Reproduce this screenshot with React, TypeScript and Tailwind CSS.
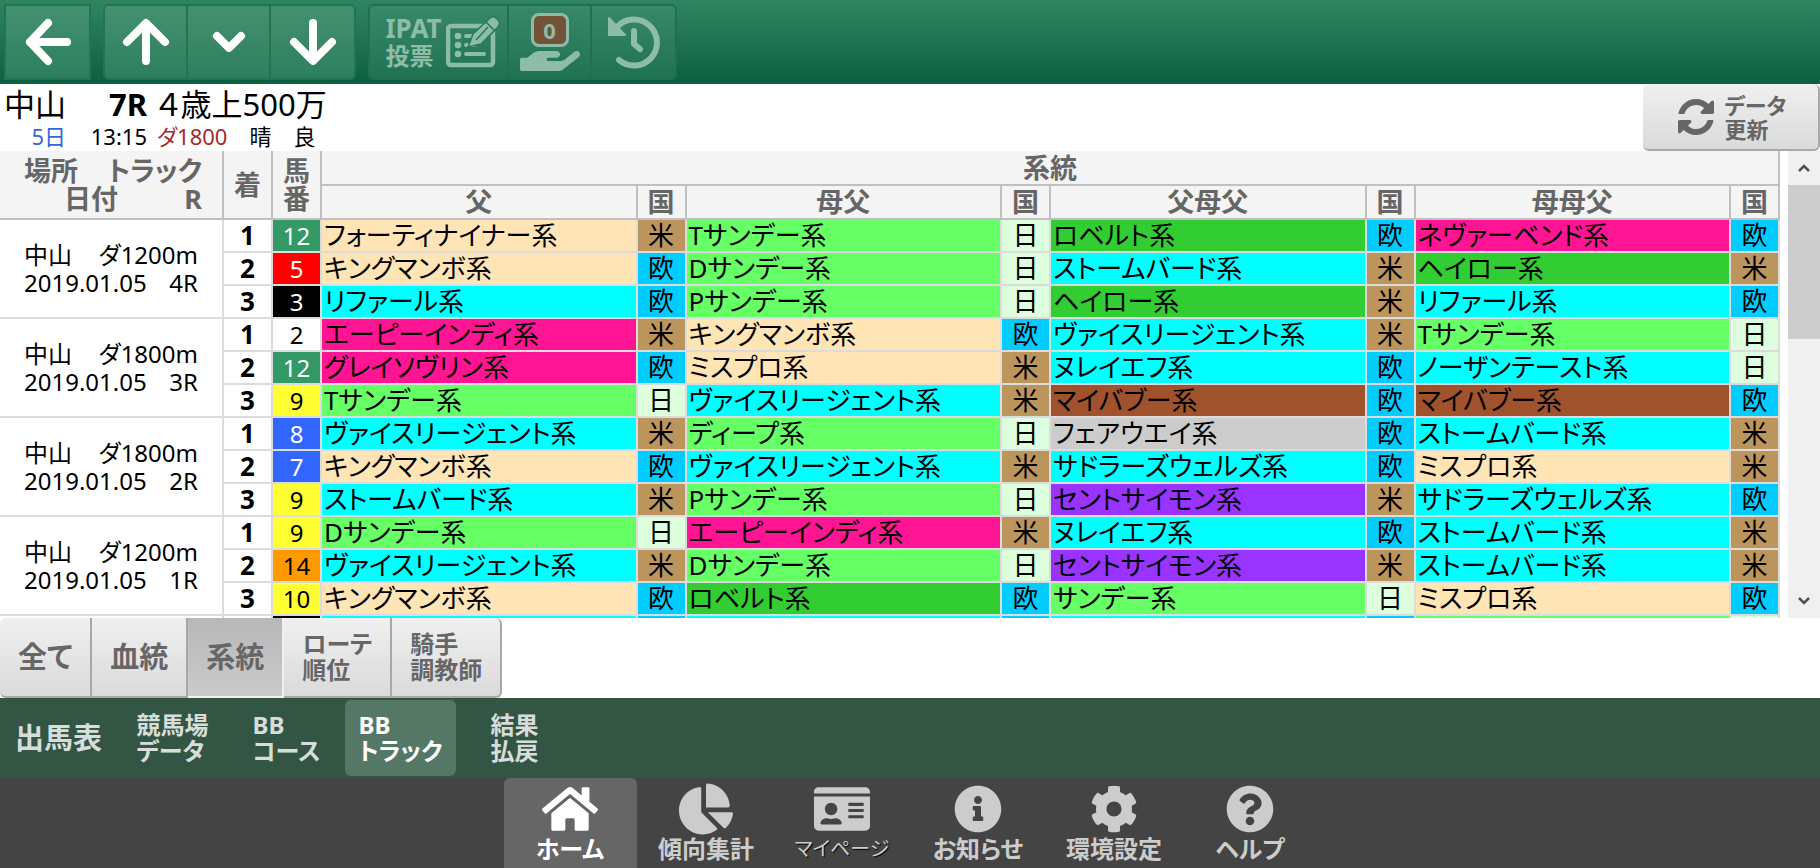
import clsx from "clsx";
import type { ReactNode } from "react";
import {
  FaChartPie,
  FaCog,
  FaHome,
  FaIdCard,
  FaInfoCircle,
  FaQuestionCircle,
} from "react-icons/fa";

// bloodline group -> cell colour
const lineColors = {
  native: "bg-[#ffe4b5]",
  northern: "bg-[#00ffff]",
  sunday: "bg-[#66ff66]",
  turn: "bg-[#32cd32]",
  nasrullah: "bg-[#ff1493]",
  mybabu: "bg-[#a0522d]",
  simon: "bg-[#9933ff]",
  other: "bg-[#cccccc]",
};

const lines: Record<string, keyof typeof lineColors> = {
  フォーティナイナー系: "native",
  キングマンボ系: "native",
  ミスプロ系: "native",
  リファール系: "northern",
  ヴァイスリージェント系: "northern",
  ストームバード系: "northern",
  ヌレイエフ系: "northern",
  ノーザンテースト系: "northern",
  サドラーズウェルズ系: "northern",
  Tサンデー系: "sunday",
  Dサンデー系: "sunday",
  Pサンデー系: "sunday",
  サンデー系: "sunday",
  ディープ系: "sunday",
  ロベルト系: "turn",
  ヘイロー系: "turn",
  エーピーインディ系: "nasrullah",
  グレイソヴリン系: "nasrullah",
  ネヴァーベンド系: "nasrullah",
  マイバブー系: "mybabu",
  セントサイモン系: "simon",
  フェアウエイ系: "other",
};

const countryColors: Record<string, string> = {
  米: "bg-[#bc955c]",
  欧: "bg-[#00ccff]",
  日: "bg-[#ddffdd]",
};

const frameColors = {
  white: "bg-white text-black",
  black: "bg-black text-white",
  red: "bg-[#ff0000] text-white",
  blue: "bg-[#3366ff] text-white",
  yellow: "bg-[#ffff33] text-black",
  green: "bg-[#339966] text-white",
  orange: "bg-[#ff9900] text-black",
};

type Horse = {
  no: number;
  frame: keyof typeof frameColors;
  blood: [string, string][];
};

type Race = { track: string; date: string; r: string; horses: Horse[] };

const races: Race[] = [
  {
    track: "ダ1200m",
    date: "2019.01.05",
    r: "4R",
    horses: [
      { no: 12, frame: "green", blood: [["フォーティナイナー系", "米"], ["Tサンデー系", "日"], ["ロベルト系", "欧"], ["ネヴァーベンド系", "欧"]] },
      { no: 5, frame: "red", blood: [["キングマンボ系", "欧"], ["Dサンデー系", "日"], ["ストームバード系", "米"], ["ヘイロー系", "米"]] },
      { no: 3, frame: "black", blood: [["リファール系", "欧"], ["Pサンデー系", "日"], ["ヘイロー系", "米"], ["リファール系", "欧"]] },
    ],
  },
  {
    track: "ダ1800m",
    date: "2019.01.05",
    r: "3R",
    horses: [
      { no: 2, frame: "white", blood: [["エーピーインディ系", "米"], ["キングマンボ系", "欧"], ["ヴァイスリージェント系", "米"], ["Tサンデー系", "日"]] },
      { no: 12, frame: "green", blood: [["グレイソヴリン系", "欧"], ["ミスプロ系", "米"], ["ヌレイエフ系", "欧"], ["ノーザンテースト系", "日"]] },
      { no: 9, frame: "yellow", blood: [["Tサンデー系", "日"], ["ヴァイスリージェント系", "米"], ["マイバブー系", "欧"], ["マイバブー系", "欧"]] },
    ],
  },
  {
    track: "ダ1800m",
    date: "2019.01.05",
    r: "2R",
    horses: [
      { no: 8, frame: "blue", blood: [["ヴァイスリージェント系", "米"], ["ディープ系", "日"], ["フェアウエイ系", "欧"], ["ストームバード系", "米"]] },
      { no: 7, frame: "blue", blood: [["キングマンボ系", "欧"], ["ヴァイスリージェント系", "米"], ["サドラーズウェルズ系", "欧"], ["ミスプロ系", "米"]] },
      { no: 9, frame: "yellow", blood: [["ストームバード系", "米"], ["Pサンデー系", "日"], ["セントサイモン系", "米"], ["サドラーズウェルズ系", "欧"]] },
    ],
  },
  {
    track: "ダ1200m",
    date: "2019.01.05",
    r: "1R",
    horses: [
      { no: 9, frame: "yellow", blood: [["Dサンデー系", "日"], ["エーピーインディ系", "米"], ["ヌレイエフ系", "欧"], ["ストームバード系", "米"]] },
      { no: 14, frame: "orange", blood: [["ヴァイスリージェント系", "米"], ["Dサンデー系", "日"], ["セントサイモン系", "米"], ["ストームバード系", "米"]] },
      { no: 10, frame: "yellow", blood: [["キングマンボ系", "欧"], ["ロベルト系", "欧"], ["サンデー系", "日"], ["ミスプロ系", "欧"]] },
    ],
  },
];

const tabs = [
  { lines: ["全て"] },
  { lines: ["血統"] },
  { lines: ["系統"], active: true },
  { lines: ["ローテ", "順位"] },
  { lines: ["騎手", "調教師"] },
];

const sections = [
  { lines: ["出馬表"] },
  { lines: ["競馬場", "データ"] },
  { lines: ["BB", "コース"] },
  { lines: ["BB", "トラック"], active: true },
  { lines: ["結果", "払戻"] },
];

const navItems = [
  { icon: FaHome, label: "ホーム", size: 56, active: true },
  { icon: FaChartPie, label: "傾向集計", size: 54 },
  { icon: FaIdCard, label: "マイページ", size: 56, thin: true },
  { icon: FaInfoCircle, label: "お知らせ", size: 48 },
  { icon: FaCog, label: "環境設定", size: 48 },
  { icon: FaQuestionCircle, label: "ヘルプ", size: 48 },
];

function Stroke({ d, width = 8 }: { d: string; width?: number }) {
  return (
    <svg viewBox="0 0 48 48" className="size-12" fill="none" stroke="currentColor" strokeWidth={width} strokeLinecap="round" strokeLinejoin="round">
      <path d={d} />
    </svg>
  );
}

function VoteIcon() {
  return (
    <svg viewBox="0 0 54 52" className="w-[54px] h-[52px] shrink-0" fill="none" stroke="currentColor">
      <rect x="2" y="10" width="45" height="39" rx="3" strokeWidth="4.5" />
      <g fill="currentColor" stroke="none">
        <circle cx="12" cy="20" r="3.3" />
        <circle cx="12" cy="29" r="3.3" />
        <circle cx="12" cy="38" r="3.3" />
      </g>
      <path d="M20 20h10M20 29h8M20 38h18" strokeWidth="4" strokeLinecap="round" />
      <path d="M22 31l5-13L43 3q4-4 7-1l2 2q3 3 0 7L35 28z" fill="currentColor" stroke="#28785a" strokeWidth="1.5" />
      <path d="M40 6l9 9M30 24L42 11" stroke="#28785a" strokeWidth="1.5" />
    </svg>
  );
}

function HandIcon() {
  return (
    <svg viewBox="0 320 576 192" className="w-[60px] h-5" fill="currentColor">
      <path d="M565.3 328.1c-11.8-10.7-30.2-10-42.6 0L430.3 402c-11.3 9.1-25.4 14-40 14H272c-8.8 0-16-7.2-16-16s7.2-16 16-16h78.3c15.9 0 30.7-10.9 33.3-26.6 3.3-20-12.1-37.4-31.6-37.4H192c-27 0-53.1 9.3-74.1 26.3L71.4 384H16c-8.8 0-16 7.2-16 16v96c0 8.8 7.2 16 16 16h356.8c14.5 0 28.6-4.9 40-14L564 377c15.2-12.1 16.4-35.3 1.3-48.9z" />
    </svg>
  );
}

function HistoryIcon() {
  return (
    <svg viewBox="0 0 54 54" className="size-[54px]" fill="none" stroke="currentColor" strokeWidth="6" strokeLinecap="round" strokeLinejoin="round">
      <path d="M10 12A23 23 0 1 1 12 45" />
      <path d="M27 16v13l6 5" />
      <path d="M2 3v17h16z" fill="currentColor" strokeWidth="2" />
    </svg>
  );
}

function RefreshIcon() {
  return (
    <svg viewBox="0 0 1536 1536" className="size-9" fill="currentColor">
      <path d="M1511 928q0 5-1 7-64 268-268 434.5T764 1536q-146 0-282.5-55T238 1324l-129 129q-19 19-45 19t-45-19-19-45V960q0-26 19-45t45-19h448q26 0 45 19t19 45-19 45l-137 137q71 66 161 102t187 36q134 0 250-65t186-179q11-17 53-117 8-23 30-23h192q13 0 22.5 9.5t9.5 22.5zm25-800v448q0 26-19 45t-45 19h-448q-26 0-45-19t-19-45 19-45l138-138Q969 256 768 256q-134 0-250 65T332 500q-11 17-53 117-8 23-30 23H50q-13 0-22.5-9.5T18 608v-7q65-268 270-434.5T768 0q146 0 284 55.5T1297 212l130-129q19-19 45-19t45 19 19 45z" />
    </svg>
  );
}

function ToolButton({ label, wide, disabled, children }: { label: string; wide?: boolean; disabled?: boolean; children: ReactNode }) {
  return (
    <button
      type="button"
      aria-label={label}
      disabled={disabled}
      className={clsx(
        "h-full flex items-center justify-center border-r-2 last:border-r-0",
        wide ? "w-[139px] pl-2 gap-1" : "w-[83px]",
        disabled
          ? "border-[#1f7050] text-[#8dbda6] bg-linear-to-b from-[#38886a] to-[#1f7351]"
          : "border-[#247354] text-white bg-linear-to-b from-[#449170] to-[#2c7f5d]",
      )}
    >
      {children}
    </button>
  );
}

function Toolbar() {
  return (
    <header className="flex items-center h-[84px] shrink-0 pl-1 bg-linear-to-b from-[#2f8562] to-[#0a6040]">
      <div className="h-[76px] border-2 border-[#247354]">
        <ToolButton label="戻る">
          <Stroke d="M24 5L6 24l18 19M6 24h37" />
        </ToolButton>
      </div>
      <div className="ml-3 flex h-[76px] rounded-md overflow-hidden border-2 border-[#247354]">
        <ToolButton label="前のレース">
          <Stroke d="M5 24L24 5l19 19M24 7v36" />
        </ToolButton>
        <ToolButton label="レース選択">
          <Stroke d="M12 18l12 12 12-12" />
        </ToolButton>
        <ToolButton label="次のレース">
          <Stroke d="M5 24l19 19 19-19M24 41V5" />
        </ToolButton>
      </div>
      <div className="ml-3 flex h-[76px] rounded-md overflow-hidden border-2 border-[#1f7050]">
        <ToolButton label="IPAT投票" wide disabled>
          <span className="text-left font-bold text-[26px] leading-7">
            <span className="block">IPAT</span>
            <span className="block text-2xl leading-7">投票</span>
          </span>
          <VoteIcon />
        </ToolButton>
        <ToolButton label="購入予定" disabled>
          <span className="flex flex-col items-center gap-1">
            <span className="w-[38px] h-[34px] rounded-lg border-[3px] border-[#8dbda6] bg-[#735338] text-[22px] leading-7 font-bold">
              0
            </span>
            <HandIcon />
          </span>
        </ToolButton>
        <ToolButton label="履歴" disabled>
          <HistoryIcon />
        </ToolButton>
      </div>
    </header>
  );
}

function RaceInfo() {
  return (
    <section className="flex items-stretch justify-between h-[67px] shrink-0">
      <div className="grid grid-cols-[66px_81px_auto] content-center text-right whitespace-nowrap">
        <span className="text-[31px] leading-9">中山</span>
        <b className="text-[31px] leading-9">7R</b>
        <span className="pl-2.5 text-left text-[31px] leading-9">４歳上500万</span>
        <span className="text-[22px] leading-7 text-[#3366dd]">5日</span>
        <span className="text-[22px] leading-7">13:15</span>
        <span className="pl-2.5 flex gap-[22px] text-left text-[22px] leading-7">
          <span className="text-[#a52a2a]">ダ1800</span>
          <span>晴</span>
          <span>良</span>
        </span>
      </div>
      <button
        type="button"
        className="w-[177px] pl-1 flex items-center justify-center gap-2.5 rounded-md border-r-2 border-b-2 border-[#a8a8a8] bg-linear-to-b from-[#f0f0f0] to-[#dadada] text-[#666]"
      >
        <RefreshIcon />
        <span className="text-left font-bold text-[22px] leading-6">
          <span className="block">データ</span>
          <span className="block">更新</span>
        </span>
      </button>
    </section>
  );
}

const th = "p-0 font-bold border-r-2 border-b-2 border-[#c0c0c0] bg-[#f4f4f4]";
const td = "p-0 border-r-2 border-b-2 border-[#dcdcdc]";

function ResultTable() {
  return (
    <table className="w-full table-fixed border-separate border-spacing-0 text-2xl leading-[31px] whitespace-nowrap">
      <colgroup>
        <col className="w-[224px]" />
        <col className="w-[49px]" />
        <col className="w-[49px]" />
        {[0, 1, 2, 3].flatMap((i) => [<col key={`n${i}`} />, <col key={`c${i}`} className="w-[49px]" />])}
      </colgroup>
      <thead className="text-[27px] leading-8 text-[#666]">
        <tr className="h-[35px]">
          <th rowSpan={2} className={clsx(th, "leading-7")}>
            <span className="flex justify-between pl-6 pr-5">
              <span>場所</span>
              <span>トラック</span>
            </span>
            <span className="flex justify-between pl-16 pr-5">
              <span>日付</span>
              <span>R</span>
            </span>
          </th>
          <th rowSpan={2} className={th}>着</th>
          <th rowSpan={2} className={clsx(th, "leading-7")}>
            <span className="block">馬</span>
            <span className="block">番</span>
          </th>
          <th colSpan={8} className={th}>系統</th>
        </tr>
        <tr className="h-[34px]">
          {["父", "母父", "父母父", "母母父"].flatMap((name) => [
            <th key={name} className={th}>{name}</th>,
            <th key={`${name}-国`} className={th}>国</th>,
          ])}
        </tr>
      </thead>
      <tbody>
        {races.map((race) =>
          race.horses.map((horse, i) => (
            <tr key={`${race.r}-${i}`} className="h-[33px]">
              {i === 0 && (
                <td rowSpan={3} className={clsx(td, "leading-7")}>
                  <span className="flex justify-between px-6">
                    <span>中山</span>
                    <span>{race.track}</span>
                  </span>
                  <span className="flex justify-between px-6">
                    <span>{race.date}</span>
                    <span>{race.r}</span>
                  </span>
                </td>
              )}
              <td className={clsx(td, "text-center text-[26px] font-bold")}>{i + 1}</td>
              <td className={clsx(td, "text-center", frameColors[horse.frame])}>{horse.no}</td>
              {horse.blood.flatMap(([name, country], j) => [
                <td key={`n${j}`} className={clsx(td, "pl-0.5 text-[26px]", lineColors[lines[name]])}>{name}</td>,
                <td key={`c${j}`} className={clsx(td, "text-center text-[26px]", countryColors[country])}>{country}</td>,
              ])}
            </tr>
          )),
        )}
        <tr className="h-[33px]" aria-hidden="true">
          <td className={td} />
          <td className={td} />
          <td className={clsx(td, frameColors.black)} />
          {["northern", "northern", "northern", "sunday"].flatMap((line, j) => [
            <td key={`n${j}`} className={clsx(td, lineColors[line as keyof typeof lineColors])} />,
            <td key={`c${j}`} className={clsx(td, j === 3 ? countryColors["日"] : countryColors["欧"])} />,
          ])}
        </tr>
      </tbody>
    </table>
  );
}

function ScrollBar() {
  return (
    <div className="ml-2 w-8 shrink-0 flex flex-col bg-[#f0f0f0] text-[#505050]">
      <button type="button" aria-label="上へ" className="h-[34px] flex items-center justify-center">
        <svg viewBox="0 0 12 8" className="w-3 h-2" fill="none" stroke="currentColor" strokeWidth="2.5">
          <path d="M1 7l5-5 5 5" />
        </svg>
      </button>
      <div className="h-[154px] bg-[#cdcdcd]" />
      <button type="button" aria-label="下へ" className="mt-auto h-[34px] flex items-center justify-center">
        <svg viewBox="0 0 12 8" className="w-3 h-2" fill="none" stroke="currentColor" strokeWidth="2.5">
          <path d="M1 1l5 5 5-5" />
        </svg>
      </button>
    </div>
  );
}

function Label({ lines: text }: { lines: string[] }) {
  return (
    <span className={clsx("text-left font-bold whitespace-nowrap", text.length > 1 ? "text-2xl leading-[26px]" : "text-[29px] leading-8")}>
      {text.map((line) => (
        <span key={line} className="block">{line}</span>
      ))}
    </span>
  );
}

export default function App() {
  return (
    <div className="h-screen flex flex-col bg-white text-black font-['Noto_Sans','Noto_Sans_CJK_JP',sans-serif] [font-feature-settings:'palt']">
      <Toolbar />
      <RaceInfo />
      <main className="flex-1 min-h-0 flex">
        <div className="flex-1 overflow-hidden">
          <ResultTable />
        </div>
        <ScrollBar />
      </main>

      <div className="flex h-20 shrink-0 text-[#666]">
        {tabs.map((tab) => (
          <button
            key={tab.lines[0]}
            type="button"
            className={clsx(
              "px-[18px] flex items-center border-r-2 border-b-2 first:rounded-l-md last:rounded-r-md bg-linear-to-b",
              tab.active ? "border-[#f0f0f0] from-[#b8b8b8] to-[#cacaca]" : "border-[#a8a8a8] from-[#f0f0f0] to-[#dadada]",
            )}
          >
            <Label lines={tab.lines} />
          </button>
        ))}
      </div>

      <nav className="flex items-center gap-[3px] h-20 shrink-0 pl-[3px] bg-[#335544]">
        {sections.map((s) => (
          <a
            key={s.lines.join("")}
            href="#"
            className={clsx(
              "w-[111px] h-[76px] flex items-center justify-center rounded-md",
              s.active ? "bg-[#557766] text-white" : "text-[#d6ddda]",
            )}
          >
            <Label lines={s.lines} />
          </a>
        ))}
      </nav>

      <nav className="flex justify-center gap-[3px] h-[90px] shrink-0 bg-[#444]">
        {navItems.map(({ icon: Icon, label, size, active, thin }) => (
          <a
            key={label}
            href="#"
            className={clsx(
              "w-[133px] pt-1.5 flex flex-col items-center rounded-t-md",
              active ? "bg-[#666] text-white" : "text-[#ccc]",
            )}
          >
            <span className="h-[50px] flex items-center">
              <Icon size={size} />
            </span>
            <span className={clsx("leading-[30px] whitespace-nowrap", thin ? "text-[20px] [text-shadow:1px_1px_1px_#000]" : "text-2xl font-bold")}>
              {label}
            </span>
          </a>
        ))}
      </nav>
    </div>
  );
}
